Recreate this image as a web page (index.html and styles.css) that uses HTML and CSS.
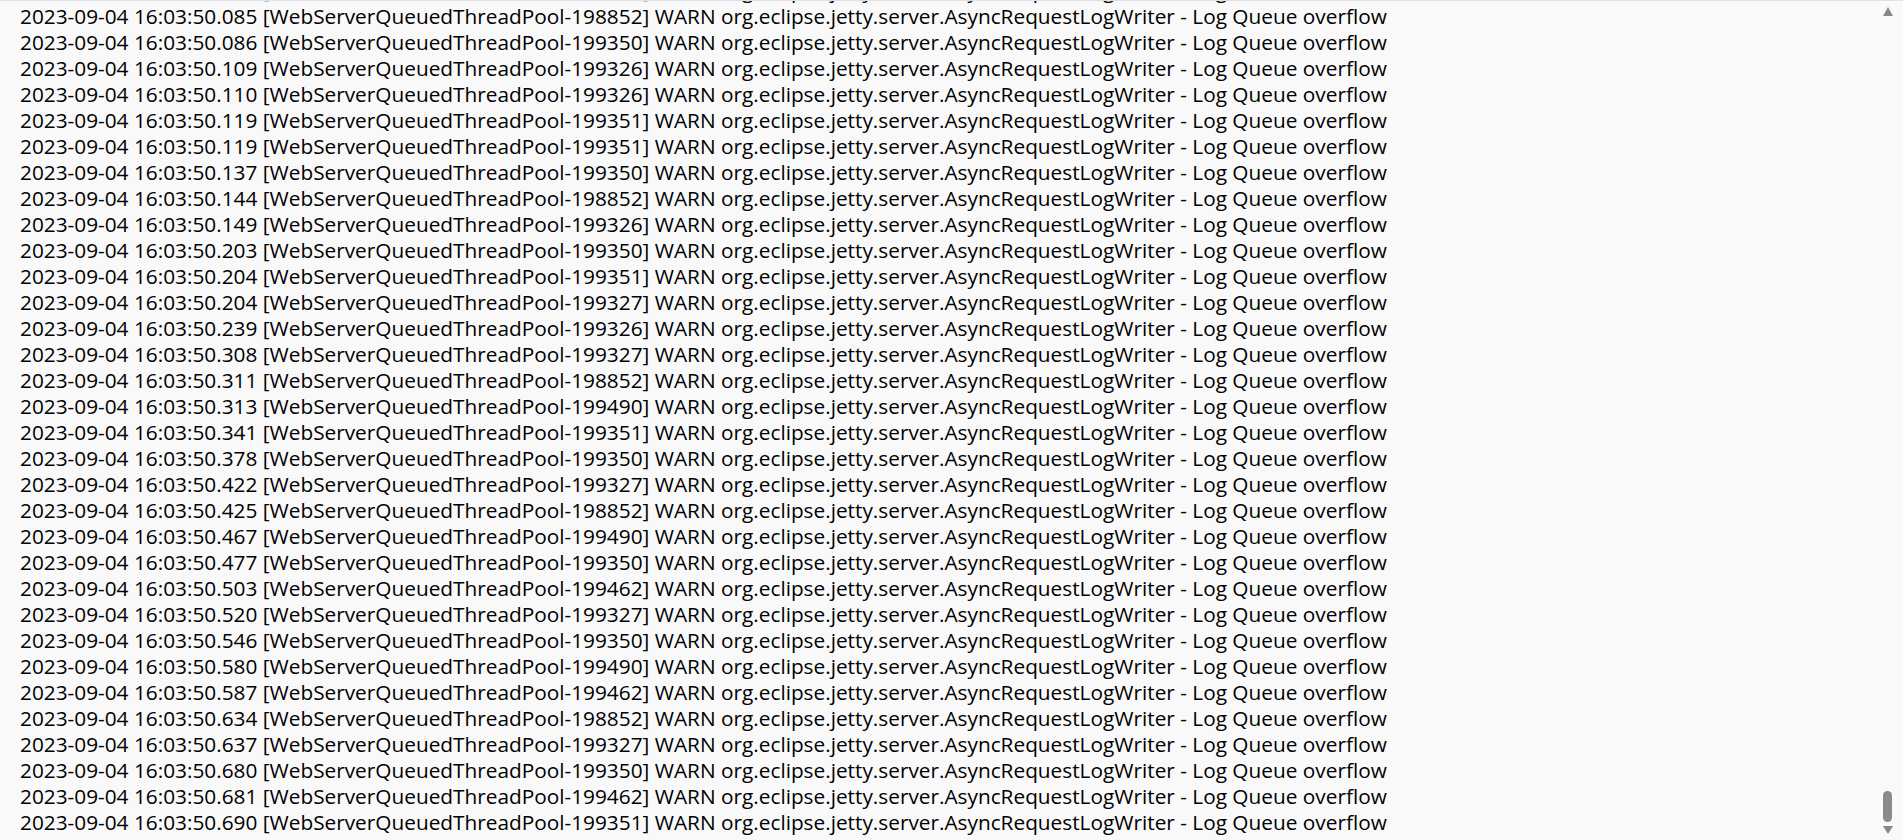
FILE: index.html
```html
<!DOCTYPE html>
<html lang="zh-CN">
<head>
    <meta charset="UTF-8">
    <title>log</title>
    <link rel="stylesheet" href="styles.css">
</head>
<body>
    <div class="viewer">
        <div class="log">
            <div class="line">2023-09-04 16:03:50.071 [WebServerQueuedThreadPool-199327] WARN org.eclipse.jetty.server.AsyncRequestLogWriter - Log Queue overflow</div>
            <div class="line">2023-09-04 16:03:50.085 [WebServerQueuedThreadPool-198852] WARN org.eclipse.jetty.server.AsyncRequestLogWriter - Log Queue overflow</div>
            <div class="line">2023-09-04 16:03:50.086 [WebServerQueuedThreadPool-199350] WARN org.eclipse.jetty.server.AsyncRequestLogWriter - Log Queue overflow</div>
            <div class="line">2023-09-04 16:03:50.109 [WebServerQueuedThreadPool-199326] WARN org.eclipse.jetty.server.AsyncRequestLogWriter - Log Queue overflow</div>
            <div class="line">2023-09-04 16:03:50.110 [WebServerQueuedThreadPool-199326] WARN org.eclipse.jetty.server.AsyncRequestLogWriter - Log Queue overflow</div>
            <div class="line">2023-09-04 16:03:50.119 [WebServerQueuedThreadPool-199351] WARN org.eclipse.jetty.server.AsyncRequestLogWriter - Log Queue overflow</div>
            <div class="line">2023-09-04 16:03:50.119 [WebServerQueuedThreadPool-199351] WARN org.eclipse.jetty.server.AsyncRequestLogWriter - Log Queue overflow</div>
            <div class="line">2023-09-04 16:03:50.137 [WebServerQueuedThreadPool-199350] WARN org.eclipse.jetty.server.AsyncRequestLogWriter - Log Queue overflow</div>
            <div class="line">2023-09-04 16:03:50.144 [WebServerQueuedThreadPool-198852] WARN org.eclipse.jetty.server.AsyncRequestLogWriter - Log Queue overflow</div>
            <div class="line">2023-09-04 16:03:50.149 [WebServerQueuedThreadPool-199326] WARN org.eclipse.jetty.server.AsyncRequestLogWriter - Log Queue overflow</div>
            <div class="line">2023-09-04 16:03:50.203 [WebServerQueuedThreadPool-199350] WARN org.eclipse.jetty.server.AsyncRequestLogWriter - Log Queue overflow</div>
            <div class="line">2023-09-04 16:03:50.204 [WebServerQueuedThreadPool-199351] WARN org.eclipse.jetty.server.AsyncRequestLogWriter - Log Queue overflow</div>
            <div class="line">2023-09-04 16:03:50.204 [WebServerQueuedThreadPool-199327] WARN org.eclipse.jetty.server.AsyncRequestLogWriter - Log Queue overflow</div>
            <div class="line">2023-09-04 16:03:50.239 [WebServerQueuedThreadPool-199326] WARN org.eclipse.jetty.server.AsyncRequestLogWriter - Log Queue overflow</div>
            <div class="line">2023-09-04 16:03:50.308 [WebServerQueuedThreadPool-199327] WARN org.eclipse.jetty.server.AsyncRequestLogWriter - Log Queue overflow</div>
            <div class="line">2023-09-04 16:03:50.311 [WebServerQueuedThreadPool-198852] WARN org.eclipse.jetty.server.AsyncRequestLogWriter - Log Queue overflow</div>
            <div class="line">2023-09-04 16:03:50.313 [WebServerQueuedThreadPool-199490] WARN org.eclipse.jetty.server.AsyncRequestLogWriter - Log Queue overflow</div>
            <div class="line">2023-09-04 16:03:50.341 [WebServerQueuedThreadPool-199351] WARN org.eclipse.jetty.server.AsyncRequestLogWriter - Log Queue overflow</div>
            <div class="line">2023-09-04 16:03:50.378 [WebServerQueuedThreadPool-199350] WARN org.eclipse.jetty.server.AsyncRequestLogWriter - Log Queue overflow</div>
            <div class="line">2023-09-04 16:03:50.422 [WebServerQueuedThreadPool-199327] WARN org.eclipse.jetty.server.AsyncRequestLogWriter - Log Queue overflow</div>
            <div class="line">2023-09-04 16:03:50.425 [WebServerQueuedThreadPool-198852] WARN org.eclipse.jetty.server.AsyncRequestLogWriter - Log Queue overflow</div>
            <div class="line">2023-09-04 16:03:50.467 [WebServerQueuedThreadPool-199490] WARN org.eclipse.jetty.server.AsyncRequestLogWriter - Log Queue overflow</div>
            <div class="line">2023-09-04 16:03:50.477 [WebServerQueuedThreadPool-199350] WARN org.eclipse.jetty.server.AsyncRequestLogWriter - Log Queue overflow</div>
            <div class="line">2023-09-04 16:03:50.503 [WebServerQueuedThreadPool-199462] WARN org.eclipse.jetty.server.AsyncRequestLogWriter - Log Queue overflow</div>
            <div class="line">2023-09-04 16:03:50.520 [WebServerQueuedThreadPool-199327] WARN org.eclipse.jetty.server.AsyncRequestLogWriter - Log Queue overflow</div>
            <div class="line">2023-09-04 16:03:50.546 [WebServerQueuedThreadPool-199350] WARN org.eclipse.jetty.server.AsyncRequestLogWriter - Log Queue overflow</div>
            <div class="line">2023-09-04 16:03:50.580 [WebServerQueuedThreadPool-199490] WARN org.eclipse.jetty.server.AsyncRequestLogWriter - Log Queue overflow</div>
            <div class="line">2023-09-04 16:03:50.587 [WebServerQueuedThreadPool-199462] WARN org.eclipse.jetty.server.AsyncRequestLogWriter - Log Queue overflow</div>
            <div class="line">2023-09-04 16:03:50.634 [WebServerQueuedThreadPool-198852] WARN org.eclipse.jetty.server.AsyncRequestLogWriter - Log Queue overflow</div>
            <div class="line">2023-09-04 16:03:50.637 [WebServerQueuedThreadPool-199327] WARN org.eclipse.jetty.server.AsyncRequestLogWriter - Log Queue overflow</div>
            <div class="line">2023-09-04 16:03:50.680 [WebServerQueuedThreadPool-199350] WARN org.eclipse.jetty.server.AsyncRequestLogWriter - Log Queue overflow</div>
            <div class="line">2023-09-04 16:03:50.681 [WebServerQueuedThreadPool-199462] WARN org.eclipse.jetty.server.AsyncRequestLogWriter - Log Queue overflow</div>
            <div class="line">2023-09-04 16:03:50.690 [WebServerQueuedThreadPool-199351] WARN org.eclipse.jetty.server.AsyncRequestLogWriter - Log Queue overflow</div>
        </div>
        <div class="scrollbar">
            <div class="arrow-up"></div>
            <div class="track"><div class="thumb"></div></div>
            <div class="arrow-down"></div>
        </div>
    </div>
</body>
</html>
```

FILE: styles.css
```css
html, body {
    margin: 0;
    height: 100%;
    background: #f9f9f9;
}

.viewer {
    height: 840px;
    box-sizing: border-box;
    border-top: 1px solid #dde2e8;
    display: flex;
    overflow: hidden;
}

.log {
    flex: 1;
    display: flex;
    flex-direction: column;
    justify-content: flex-end;
    padding: 0 0 5px 20px;
    font-family: "Open Sans", sans-serif;
    font-size: 20.8px;
    line-height: 26px;
    color: #000;
    white-space: pre;
    overflow: hidden;
}

.scrollbar {
    width: 17px;
    padding: 6px 7px 6px 0;
    display: flex;
    flex-direction: column;
    align-items: center;
}

.arrow-up {
    width: 0;
    height: 0;
    border-left: 5.5px solid transparent;
    border-right: 5.5px solid transparent;
    border-bottom: 9px solid #888;
}

.track {
    flex: 1;
    width: 100%;
    display: flex;
    flex-direction: column;
    justify-content: flex-end;
    align-items: center;
    padding-bottom: 4px;
}

.thumb {
    width: 9px;
    height: 31px;
    border-radius: 5px;
    background: #8a8a8a;
}

.arrow-down {
    width: 0;
    height: 0;
    border-left: 5px solid transparent;
    border-right: 5px solid transparent;
    border-top: 8px solid #888;
}
```
